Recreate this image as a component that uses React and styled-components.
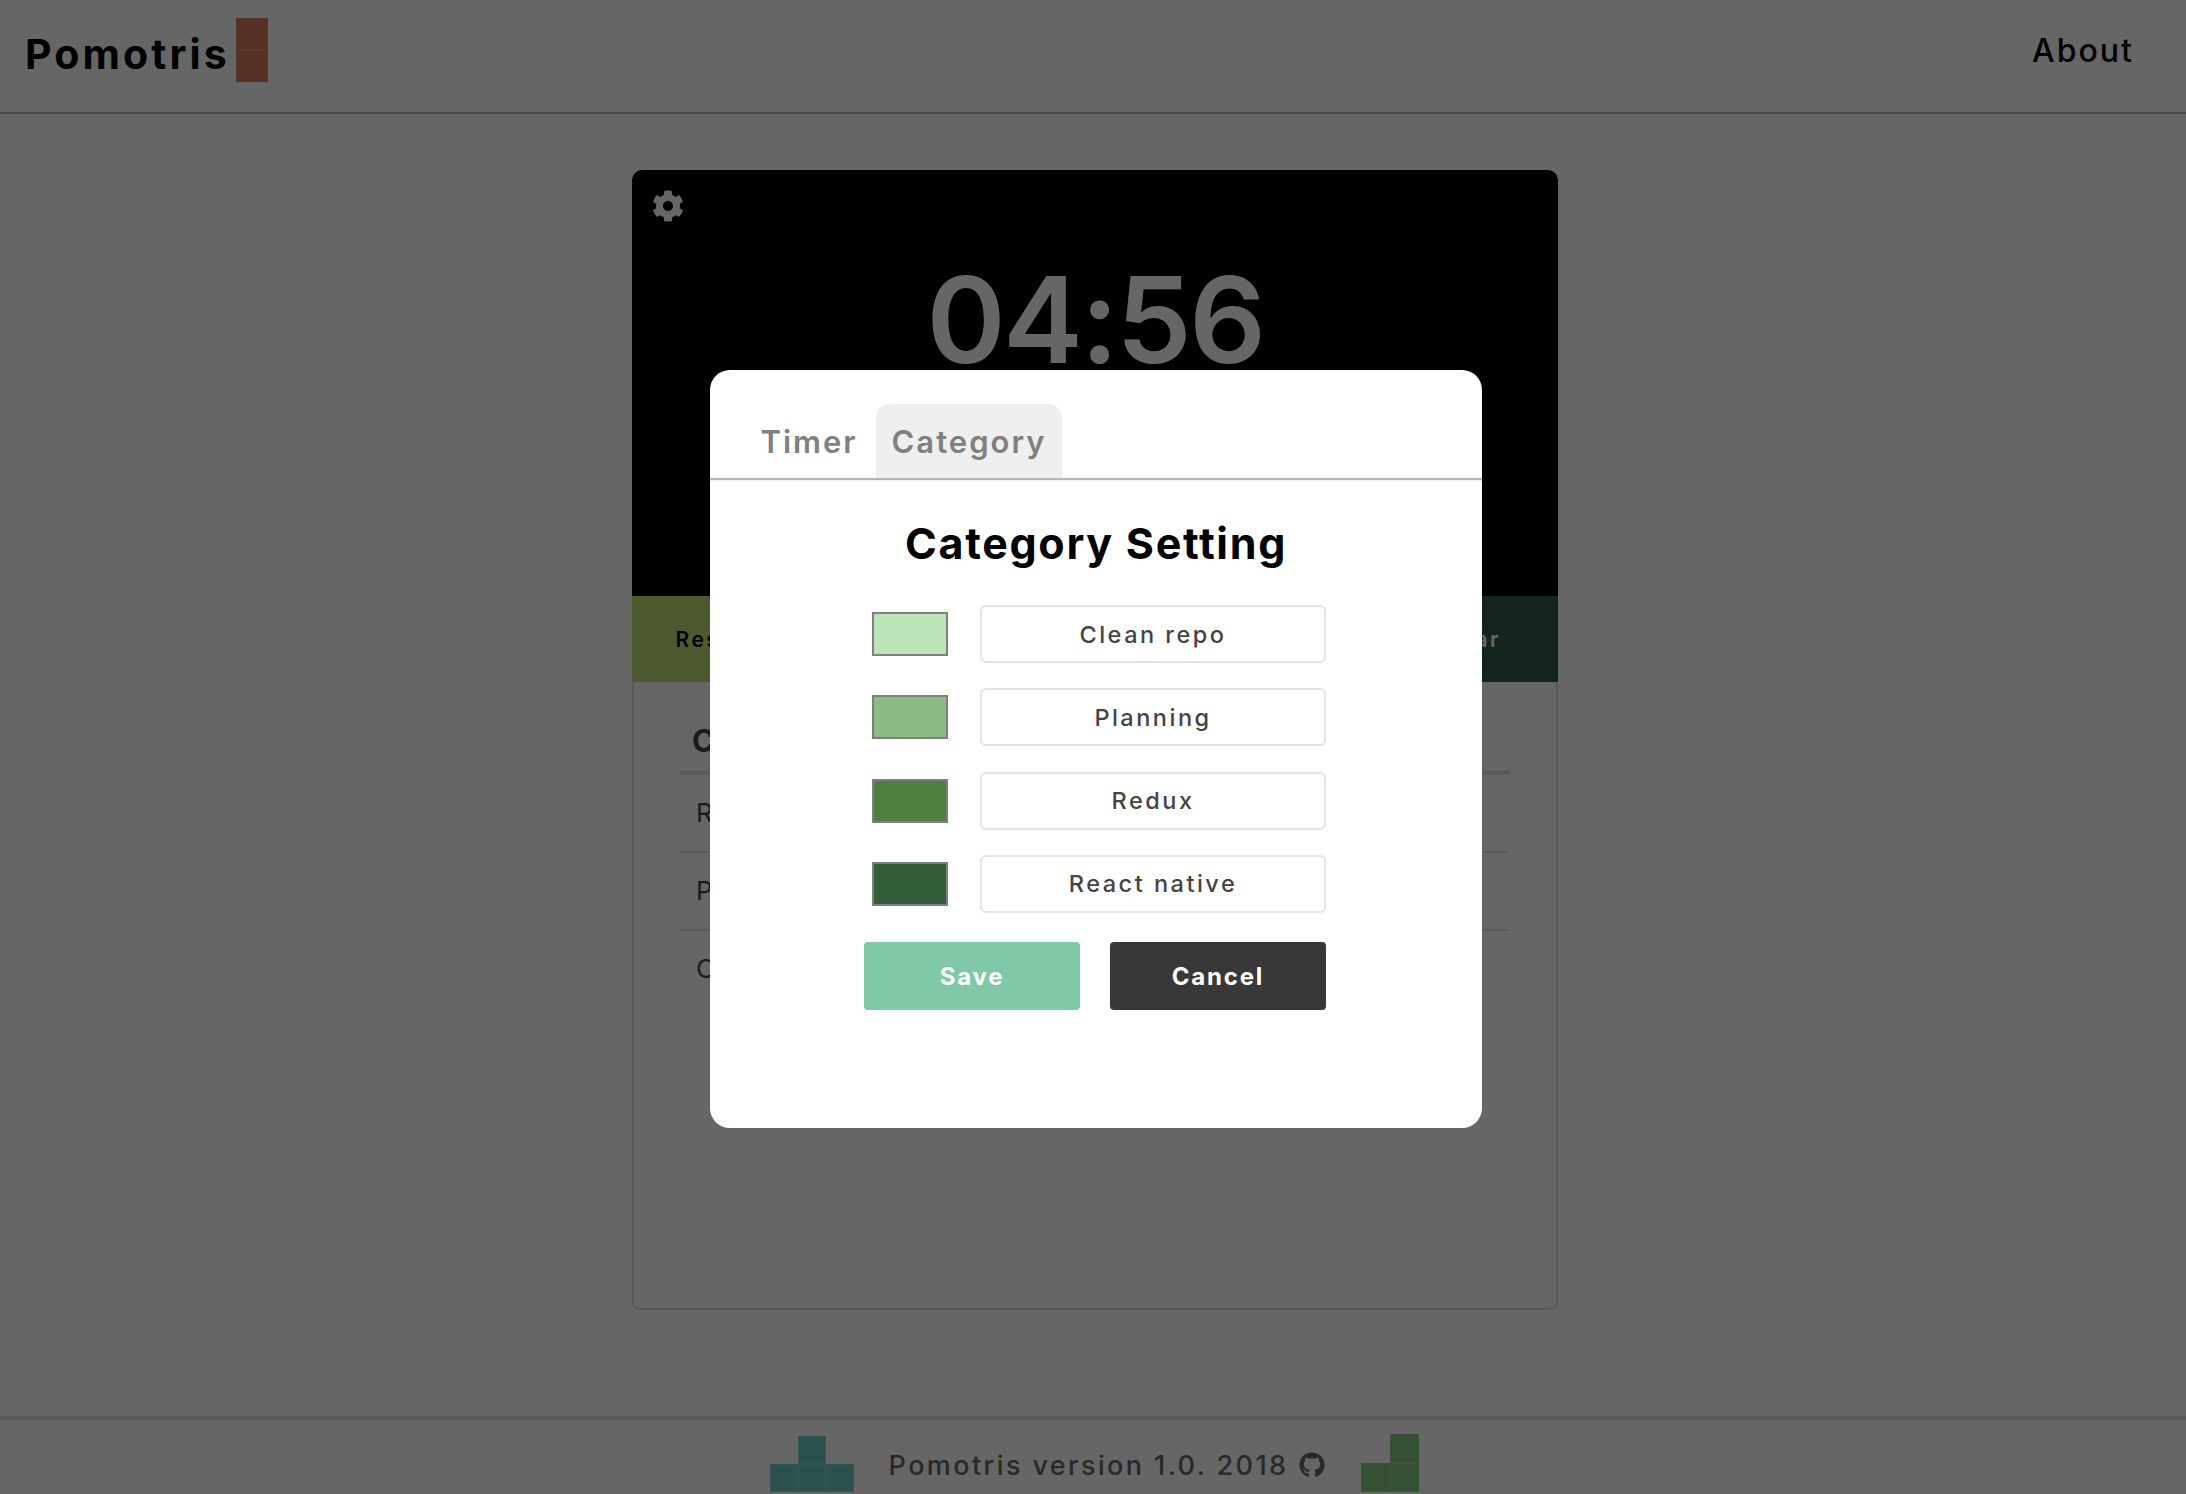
import React from "react";
import styled, { createGlobalStyle } from "styled-components";
import { FaCog, FaGithub } from "react-icons/fa";

const Global = createGlobalStyle`
  html, body { margin: 0; padding: 0; height: 100%; overflow: hidden; background: #fff; }
  * { box-sizing: border-box; }
  body { font-family: "Inter", "Noto Sans", "Liberation Sans", sans-serif; }
`;

const Page = styled.div`
  height: 1494px;
  display: flex;
  flex-direction: column;
`;

const Header = styled.header`
  height: 114px;
  flex: none;
  border-bottom: 2px solid #b9b9b9;
  display: flex;
  justify-content: space-between;
  align-items: flex-start;
  padding: 18px 52px 0 25px;
`;

const Brand = styled.div`
  display: flex;
  align-items: flex-start;
  gap: 6px;
`;

const BrandName = styled.div`
  font-size: 41px;
  font-weight: 700;
  line-height: 73px;
  letter-spacing: 3.1px;
  color: #000;
`;

const BlockColumn = styled.div`
  display: flex;
  flex-direction: column;
`;

const Block = styled.div`
  width: ${(p) => p.$size}px;
  height: ${(p) => p.$size}px;
  background: ${(p) => p.$color};
  border: 1px solid rgba(255, 255, 255, 0.15);
`;

const NavLink = styled.div`
  font-size: 32px;
  font-weight: 500;
  line-height: 66px;
  letter-spacing: 2px;
  color: #000;
`;

const Main = styled.main`
  flex: 1;
  padding: 56px 0 0 4px;
  display: flex;
  justify-content: center;
  align-items: flex-start;
`;

const Card = styled.section`
  width: 926px;
`;

const TimerPanel = styled.div`
  height: 426px;
  background: #000;
  border-radius: 10px 10px 0 0;
  padding: 20px 21px 0;
  color: #fff;
`;

const SettingsIcon = styled(FaCog)`
  display: block;
  width: 32px;
  height: 32px;
  margin-left: -1px;
  color: #fff;
`;

const Clock = styled.div`
  margin-top: 23px;
  text-align: center;
  font-size: 120px;
  font-weight: 600;
  line-height: 150px;
  letter-spacing: -2.5px;
`;

const ControlBar = styled.div`
  height: 86px;
  display: grid;
  grid-template-columns: repeat(6, 1fr);
`;

const Control = styled.div`
  background: ${(p) => p.$color};
  color: ${(p) => p.$text};
  padding: 0 ${(p) => p.$inset || 0}px 0 2px;
  display: flex;
  align-items: center;
  justify-content: center;
  font-size: 21px;
  font-weight: 600;
  letter-spacing: 2.4px;
`;

const ListPanel = styled.div`
  height: 628px;
  border: 2px solid #dedede;
  border-top: none;
  border-radius: 0 0 8px 8px;
  padding: 30px 46px 0;
`;

const ListHead = styled.div`
  height: 63px;
  border-bottom: 4px solid #dedede;
  padding-left: 12px;
  font-size: 31px;
  font-weight: 700;
  line-height: 58px;
  color: #444;
`;

const ListRow = styled.div`
  height: 78px;
  border-bottom: ${(p) => (p.$last ? "none" : "2px solid #e4e4e4")};
  padding-left: 16px;
  font-size: 26px;
  line-height: 76px;
  color: #444;
`;

const Footer = styled.footer`
  height: 78px;
  flex: none;
  border-top: 4px solid #e0e0e0;
  display: flex;
  justify-content: center;
  align-items: flex-start;
  padding-left: 3px;
`;

const TeeShape = styled.div`
  margin-top: 16px;
  display: flex;
  flex-direction: column;
  align-items: center;
`;

const ElShape = styled.div`
  margin: 14px 0 0 36px;
  display: flex;
  flex-direction: column;
  align-items: flex-end;
`;

const BlockRow = styled.div`
  display: flex;
`;

const FooterText = styled.div`
  margin-left: 35px;
  padding-top: 16px;
  display: flex;
  align-items: center;
  gap: 11px;
  height: 74px;
  font-size: 27px;
  font-weight: 500;
  letter-spacing: 2.4px;
  color: #666;
`;

const GithubIcon = styled(FaGithub)`
  width: 26px;
  height: 26px;
  color: #666;
`;

const Overlay = styled.div`
  position: fixed;
  inset: 0;
  background: rgba(0, 0, 0, 0.6);
  display: flex;
  align-items: center;
  justify-content: center;
  padding: 4px 0 0 6px;
`;

const Modal = styled.div`
  width: 772px;
  height: 758px;
  background: #fff;
  border-radius: 20px;
  padding-top: 34px;
`;

const TabBar = styled.div`
  height: 76px;
  border-bottom: 2px solid #b4b4b4;
  box-shadow: 0 2px 0 #f2f2f2;
  display: flex;
  padding-left: 32px;
`;

const Tab = styled.div`
  height: 74px;
  width: ${(p) => p.$width}px;
  border-radius: 14px 14px 0 0;
  background: ${(p) => (p.$active ? "#efefef" : "transparent")};
  color: #808080;
  display: flex;
  align-items: center;
  justify-content: center;
  font-size: 31px;
  font-weight: 600;
  letter-spacing: 2px;
`;

const Title = styled.h2`
  margin: 35px 0 34px;
  text-align: center;
  font-size: 43px;
  font-weight: 700;
  line-height: 56px;
  letter-spacing: 1.7px;
  color: #000;
`;

const Form = styled.div`
  width: 462px;
  margin-left: 154px;
  display: flex;
  flex-direction: column;
  gap: 25.3px;
`;

const Row = styled.div`
  display: flex;
  align-items: center;
  justify-content: space-between;
  height: 58px;
  padding-left: 8px;
`;

const Swatch = styled.div`
  width: 76px;
  height: 44px;
  background: ${(p) => p.$color};
  border: 2px solid #7f7f7f;
`;

const NameField = styled.div`
  width: 346px;
  height: 58px;
  border: 2px solid #e4e4e4;
  border-radius: 6px;
  display: flex;
  align-items: center;
  justify-content: center;
  font-size: 23.5px;
  font-weight: 500;
  letter-spacing: 2.5px;
  color: #444;
`;

const Actions = styled.div`
  display: flex;
  justify-content: space-between;
  margin-top: 4px;
`;

const Action = styled.div`
  width: 216px;
  height: 68px;
  border-radius: 4px;
  background: ${(p) => p.$color};
  display: flex;
  align-items: center;
  justify-content: center;
  color: #fff;
  font-size: 24px;
  font-weight: 700;
  letter-spacing: 1.8px;
`;

const categories = [
  ["Clean repo", "#bbe5b8"],
  ["Planning", "#8cbb83"],
  ["Redux", "#4c7f40"],
  ["React native", "#345e3a"],
];

const orange = "#d67560";
const teal = "#6fcac6";
const green = "#88c87f";

export default function App() {
  return (
    <>
      <Global />
      <Page>
        <Header>
          <Brand>
            <BrandName>Pomotris</BrandName>
            <BlockColumn>
              <Block $size={32} $color={orange} />
              <Block $size={32} $color={orange} />
            </BlockColumn>
          </Brand>
          <NavLink>About</NavLink>
        </Header>
        <Main>
          <Card>
            <TimerPanel>
              <SettingsIcon />
              <Clock>04:56</Clock>
            </TimerPanel>
            <ControlBar>
              <Control $color="#c0e175" $text="#000">Reset</Control>
              <Control $color="#a5d67e" $text="#000" />
              <Control $color="#8ac77f" $text="#000" />
              <Control $color="#6fb07a" $text="#000" />
              <Control $color="#4f8a6a" $text="#fff" />
              <Control $color="#325c4d" $text="#fff" $inset={28}>Clear</Control>
            </ControlBar>
            <ListPanel>
              <ListHead>Category</ListHead>
              <ListRow>Redux</ListRow>
              <ListRow>Planning</ListRow>
              <ListRow $last>Clean repo</ListRow>
            </ListPanel>
          </Card>
        </Main>
        <Footer>
          <TeeShape>
            <Block $size={28} $color={teal} />
            <BlockRow>
              <Block $size={28} $color={teal} />
              <Block $size={28} $color={teal} />
              <Block $size={28} $color={teal} />
            </BlockRow>
          </TeeShape>
          <FooterText>
            Pomotris version 1.0. 2018
            <GithubIcon />
          </FooterText>
          <ElShape>
            <Block $size={29} $color={green} />
            <BlockRow>
              <Block $size={29} $color={green} />
              <Block $size={29} $color={green} />
            </BlockRow>
          </ElShape>
        </Footer>
      </Page>
      <Overlay>
        <Modal>
          <TabBar>
            <Tab $width={134}>Timer</Tab>
            <Tab $width={186} $active>Category</Tab>
          </TabBar>
          <Title>Category Setting</Title>
          <Form>
            {categories.map(([name, color]) => (
              <Row key={name}>
                <Swatch $color={color} />
                <NameField>{name}</NameField>
              </Row>
            ))}
            <Actions>
              <Action $color="#7fc9a9">Save</Action>
              <Action $color="#383838">Cancel</Action>
            </Actions>
          </Form>
        </Modal>
      </Overlay>
    </>
  );
}
